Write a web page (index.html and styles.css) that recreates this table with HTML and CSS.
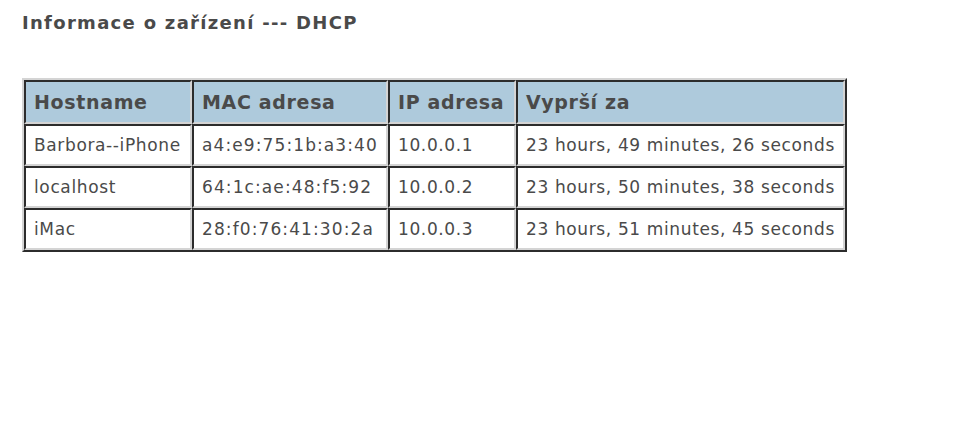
FILE: index.html
```html
<!DOCTYPE html>
<html>
<head>
<meta charset="utf-8">
<link rel="stylesheet" href="styles.css">
</head>
<body>
<h1 class="title">Informace o zařízení --- DHCP</h1>
<table class="dhcp">
  <thead>
    <tr><th class="c-host">Hostname</th><th class="c-mac">MAC adresa</th><th class="c-ip">IP adresa</th><th class="c-exp">Vyprší za</th></tr>
  </thead>
  <tbody>
    <tr><td>Barbora--iPhone</td><td class="mac">a4:e9:75:1b:a3:40</td><td>10.0.0.1</td><td>23 hours, 49 minutes, 26 seconds</td></tr>
    <tr><td>localhost</td><td class="mac">64:1c:ae:48:f5:92</td><td>10.0.0.2</td><td>23 hours, 50 minutes, 38 seconds</td></tr>
    <tr><td>iMac</td><td class="mac">28:f0:76:41:30:2a</td><td>10.0.0.3</td><td>23 hours, 51 minutes, 45 seconds</td></tr>
  </tbody>
</table>
</body>
</html>
```
FILE: styles.css
```css
body {
  margin: 0;
  padding: 11px 22px;
  font-family: "DejaVu Sans", Verdana, sans-serif;
  color: #4a4a4a;
  background: #fff;
}
.title {
  font-size: 18px;
  letter-spacing: 1.3px;
  font-weight: bold;
  margin: 0 0 43px 0;
  line-height: 24px;
}
.dhcp {
  border-collapse: separate;
  border-spacing: 0;
  border: 2px solid;
  border-color: #d4d4d4 #2c2c2c #2c2c2c #d4d4d4;
  font-size: 17px;
  letter-spacing: 0.63px;
}
.dhcp th, .dhcp td {
  border: 2px solid;
  border-color: #2c2c2c #d4d4d4 #d4d4d4 #2c2c2c;
  text-align: left;
  padding: 0 8px;
  white-space: nowrap;
}
.dhcp th {
  background: #aecadc;
  font-size: 19px;
  letter-spacing: 0.66px;
  font-weight: bold;
  height: 40px;
}
.dhcp td {
  height: 38px;
}
.dhcp td.mac {
  letter-spacing: 1.1px;
}
.c-host { width: 148px; }
.c-mac { width: 174px; }
.c-ip { width: 108px; }
.c-exp { width: 308px; }
```
